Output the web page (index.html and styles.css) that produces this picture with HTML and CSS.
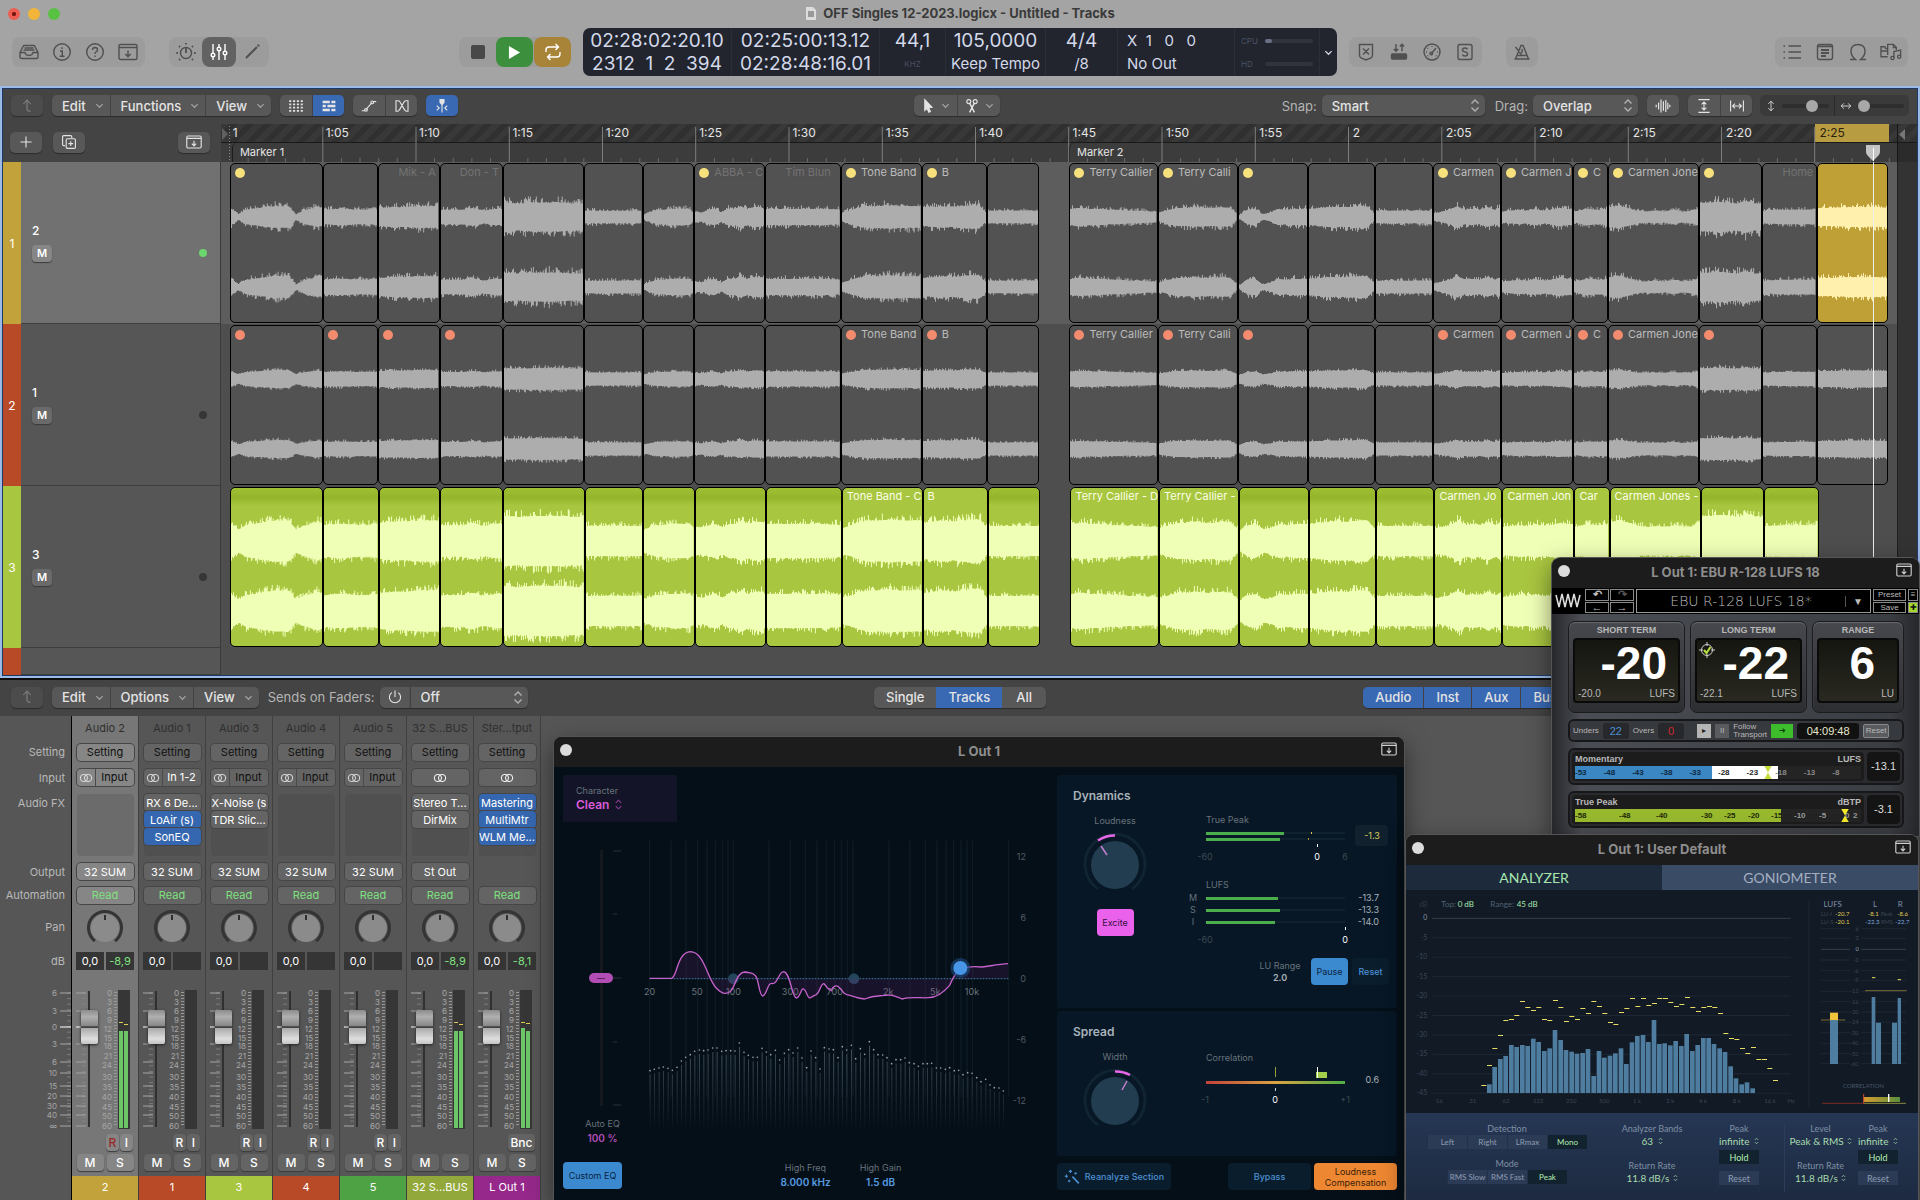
FILE: index.html
```html
<!DOCTYPE html>
<html lang="en">
<head>
<meta charset="UTF-8" />
<meta name="viewport" content="width=device-width, initial-scale=1" />
<title>OFF Singles 12-2023.logicx - Untitled - Tracks</title>
<link rel="stylesheet" href="styles.css">
</head>
<body>

<!-- icon set -->
<svg class="sprite" aria-hidden="true">
  <symbol id="i-inbox" viewBox="0 0 20 20"><path d="M1 10.500 4 4.500Q4.400 3.500 5.500 3.500h9q1.100 0 1.500 1L19 10.500V15q0 1.500-1.500 1.500h-15Q1 16.500 1 15zM1 10.500h5q.5 3 4 3t4-3h5M5.500 6h9M4.500 8h11"/></symbol>
  <symbol id="i-info" viewBox="0 0 20 20"><circle cx="10" cy="10" r="8.300"/><path d="M8 9h2.300v5M7.800 14.300h4.600M10 5.200v1.800"/></symbol>
  <symbol id="i-help" viewBox="0 0 20 20"><circle cx="10" cy="10" r="8.300"/><path d="M7.500 8q0-2.500 2.500-2.500T12.500 8q0 1.200-1.500 2-1 .6-1 2M10 13.500v1.500"/></symbol>
  <symbol id="i-dock" viewBox="0 0 20 20"><rect x="1" y="2.500" width="18" height="15" rx="1.500"/><path d="M1 5.500h18M10 8.500v6M7.300 12l2.700 2.800 2.700-2.800"/></symbol>
  <symbol id="i-knob" viewBox="0 0 20 20"><circle cx="10" cy="11" r="5.500"/><path d="M10 5.500V11" stroke-width="1.800"/><path d="M10 1v1.600M3 4l1.100 1.100M17 4l-1.100 1.100M.3 11h1.600M18.100 11h1.600M3 18l1.100-1.100M17 18l-1.100-1.100" stroke-width="1.800"/></symbol>
  <symbol id="i-faders" viewBox="0 0 20 20"><path d="M4 2v9M4 15v3M10 2v3M10 9v9M16 2v7M16 13v5"/><circle cx="4" cy="13" r="1.800"/><circle cx="10" cy="7" r="1.800"/><circle cx="16" cy="11" r="1.800"/></symbol>
  <symbol id="i-pencil" viewBox="0 0 20 20"><path d="M4 16 15 5" stroke-width="2.200"/><path d="M15.800 4.200 17 3" stroke-width="2.600"/></symbol>
  <symbol id="i-cycle" viewBox="0 0 20 20"><path d="M3 10V8q0-3 3-3h9M12.500 2l3 3-3 3M17 10v2q0 3-3 3H5M7.500 18l-3-3 3-3"/></symbol>
  <symbol id="i-shield" viewBox="0 0 20 20"><path d="M3.500 2.500h13V13q0 2-1.500 3l-5 2-5-2q-1.500-1-1.500-3zM7 6.500l6 6M13 6.500l-6 6"/></symbol>
  <symbol id="i-inout" viewBox="0 0 20 20"><path d="M7 2v7M4.800 7 7 9.300 9.200 7M13 9.300v-7M10.800 4.500 13 2.200l2.200 2.300"/><rect x="2.500" y="12" width="15" height="5" rx="1" fill="currentColor"/></symbol>
  <symbol id="i-gauge" viewBox="0 0 20 20"><circle cx="10" cy="10" r="8"/><path d="M9.500 11.500 14 6M10 4v.8M5.500 6l.6.600M4 10h.8M15.200 10h.8M5.500 14l.6-.6M14.500 14l-.6-.6" /><circle cx="9.300" cy="11.500" r="1.300"/></symbol>
  <symbol id="i-solo" viewBox="0 0 20 20"><rect x="3" y="2.500" width="14" height="15" rx="1.800"/><path d="M12.600 7.300Q12 6 10 6 7.500 6 7.500 8q0 1.500 2.500 1.900t2.600 2.100q0 2-2.600 2-2.100 0-2.700-1.500"/></symbol>
  <symbol id="i-metro" viewBox="0 0 20 20"><path d="M3.500 17 9 3.500h2L16.500 17zM5 13.500h10M10 13.500 3.500 5M10 7v4M2.500 17h15"/></symbol>
  <symbol id="i-list" viewBox="0 0 20 20"><path d="M6.500 4H19M6.500 10H19M6.500 16H19M1.500 4h1.500M1.500 10h1.500M1.500 16h1.500"/></symbol>
  <symbol id="i-note" viewBox="0 0 20 20"><rect x="2.500" y="2.500" width="15" height="15" rx="2"/><path d="M3 4.300h14M6 8h8M6 11h8M6 14h5" stroke-width="1.800"/></symbol>
  <symbol id="i-loop" viewBox="0 0 20 20"><path d="M2 17.500h5.500Q3 14 3 9.300 3 2.500 10 2.500t7 6.800q0 4.700-4.500 8.200H18"/></symbol>
  <symbol id="i-media" viewBox="0 0 24 20"><path d="M8 15H1V4.500h4l1 1.800h2M1 9h7M8 13V2h6l3 3v3M14 2v3.500h3M14.500 16V9.500l7-1.500v6.500"/><circle cx="13" cy="16.300" r="1.700"/><circle cx="20" cy="15" r="1.700"/></symbol>
  <symbol id="i-up" viewBox="0 0 20 20"><path d="M5.500 7.500 10 2.500l4.500 5M10 3v10q0 3.500 4.500 3.500"/></symbol>
  <symbol id="i-chev" viewBox="0 0 10 10"><path d="M1.500 3.500 5 7l3.500-3.500"/></symbol>
  <symbol id="i-grid" viewBox="0 0 20 20"><path d="M1.500 4h17M1.500 8h17M1.500 12h17M1.500 16h17" stroke-width="2.200" stroke-dasharray="2.600 2.200"/></symbol>
  <symbol id="i-bars" viewBox="0 0 20 20"><path d="M2 5h9M13 5h5M2 10h4M8 10h10M2 15h9M13 15h5" stroke-width="3"/></symbol>
  <symbol id="i-auto" viewBox="0 0 20 20"><path d="M1 16h4M15 4.500h4M6 14.500 13.500 6"/><circle cx="6.300" cy="14.800" r="1.700"/><circle cx="14" cy="5.500" r="1.700"/></symbol>
  <symbol id="i-flex" viewBox="0 0 20 20"><path d="M2.500 3.500H5q1.500 0 2.500 1.500l5.500 9.500q1 2 2.500 2h2v-13H15q-1.500 0-2.500 1.500L7 14.500q-1 2-2.500 2h-2z"/></symbol>
  <symbol id="i-catch" viewBox="0 0 20 20"><path d="M10 7v11M3.500 9.500 6.500 12.500l-3 3M16.500 9.500l-3 3 3 3"/><path d="M7.500 2h5v3.500L10 8 7.500 5.500z" fill="currentColor"/></symbol>
  <symbol id="i-arrow" viewBox="0 0 20 20"><path d="M6 2l9 9.500-4.300.3 2.300 5-2 1-2.300-5L6 15.500z" fill="currentColor"/></symbol>
  <symbol id="i-scissors" viewBox="0 0 20 20"><circle cx="6" cy="4.500" r="2.500"/><circle cx="14" cy="4.500" r="2.500"/><path d="M7.200 6.800 13 18M12.800 6.800 7 18" stroke-width="1.800"/></symbol>
  <symbol id="i-wave" viewBox="0 0 20 20"><path d="M1.500 8.500v3M4.500 5.500v9M7.500 2v16M10.500 4v12M13.500 2.500v15M16 6v8M18.500 8.500v3" stroke-width="1.500"/></symbol>
  <symbol id="i-vfit" viewBox="0 0 20 20"><path d="M3 2h14M3 18h14M10 5v10M7 8l3-3 3 3M7 12l3 3 3-3"/></symbol>
  <symbol id="i-hfit" viewBox="0 0 20 20"><path d="M2 3v14M18 3v14M4.500 10h11M7.500 7l-3 3 3 3M12.500 7l3 3-3 3"/></symbol>
  <symbol id="i-varrow" viewBox="0 0 20 20"><path d="M10 2v16M5.500 6.500 10 2l4.500 4.500M5.500 13.500 10 18l4.500-4.500"/></symbol>
  <symbol id="i-harrow" viewBox="0 0 20 20"><path d="M2 10h16M6.500 5.500 2 10l4.500 4.500M13.500 5.500 18 10l-4.500 4.500"/></symbol>
  <symbol id="i-plus" viewBox="0 0 20 20"><path d="M10 3v14M3 10h14"/></symbol>
  <symbol id="i-dup" viewBox="0 0 20 20"><path d="M5 14.500H3.500Q2 14.500 2 13V3.500Q2 2 3.500 2H12q1.500 0 1.500 1.500V5"/><rect x="6.500" y="6" width="11.500" height="12" rx="1.500"/><path d="M12.200 9v6M9.200 12h6"/></symbol>
  <symbol id="i-power" viewBox="0 0 20 20"><path d="M10 2v8M6 4.500a7 7 0 1 0 8 0"/></symbol>
  <symbol id="i-rings" viewBox="0 0 20 20"><circle cx="7" cy="10" r="5.200"/><circle cx="13" cy="10" r="5.200"/></symbol>
  <symbol id="i-updown" viewBox="0 0 10 14"><path d="M1.500 5 5 1.500 8.500 5M1.500 9 5 12.500 8.500 9"/></symbol>
  <symbol id="i-wand" viewBox="0 0 20 20"><path d="M10.500 9.500 18.500 18" stroke-width="2"/><path d="M8 1v4M6 3h4M3 7v4M1 9h4M14.500 4v3M13 5.500h3M6.500 13.500v3M5 15h3"/></symbol>
</svg>

<header class="titlebar">
  <span class="lights"><i class="red"></i><i class="amber"></i><i class="green"></i></span>
  <svg class="doc" viewBox="0 0 12 15"><path d="M1 1h7l3 3v10H1z" fill="#dcdcdc"/><rect x="3" y="5" width="6" height="6" fill="#999"/></svg>
  <h1>OFF Singles 12-2023.logicx - Untitled - Tracks</h1>
</header>

<div class="toolbar">
  <div class="zone">
    <div class="pill four">
      <button aria-label="Library"><svg class="ic"><use href="#i-inbox"/></svg></button>
      <button aria-label="Inspector"><svg class="ic"><use href="#i-info"/></svg></button>
      <button aria-label="Quick Help"><svg class="ic"><use href="#i-help"/></svg></button>
      <button aria-label="Toolbar"><svg class="ic"><use href="#i-dock"/></svg></button>
    </div>
    <div class="pill three">
      <button aria-label="Smart Controls"><svg class="ic"><use href="#i-knob"/></svg></button>
      <button class="on" aria-label="Mixer"><svg class="ic"><use href="#i-faders"/></svg></button>
      <button aria-label="Editors"><svg class="ic"><use href="#i-pencil"/></svg></button>
    </div>
    <div class="pill transport">
      <button aria-label="Stop"><span class="stop"></span></button>
      <button class="play" aria-label="Play"><svg viewBox="0 0 14 16"><path d="M1 1l12 7-12 7z" fill="#fff"/></svg></button>
      <button class="cycle" aria-label="Cycle"><svg class="ic"><use href="#i-cycle"/></svg></button>
    </div>
  </div>
  <div class="lcd">
    <div class="c1"><b>02:28:02:20.10</b><b>2312&nbsp; 1&nbsp; 2&nbsp; 394</b></div>
    <div class="c2"><b>02:25:00:13.12</b><b>02:28:48:16.01</b></div>
    <div class="c3"><b>44,1</b><small>KHZ</small></div>
    <div class="c4"><b>105,0000</b><span>Keep Tempo</span></div>
    <div class="c5"><b>4/4</b><span>/8</span></div>
    <div class="c6"><span>X&nbsp; 1&nbsp;&nbsp; 0&nbsp;&nbsp; 0</span><span>No Out</span></div>
    <div class="c7"><label>CPU <i class="load"><i></i></i></label><label>HD <i class="load"></i></label></div>
    <button class="c8" aria-label="Display options"><svg class="ic small"><use href="#i-chev"/></svg></button>
  </div>
  <div class="zone">
    <div class="pill four">
      <button aria-label="Replace"><svg class="ic"><use href="#i-shield"/></svg></button>
      <button aria-label="Low Latency"><svg class="ic"><use href="#i-inout"/></svg></button>
      <button aria-label="Tuner"><svg class="ic"><use href="#i-gauge"/></svg></button>
      <button aria-label="Solo"><svg class="ic"><use href="#i-solo"/></svg></button>
    </div>
    <div class="pill one">
      <button aria-label="Metronome"><svg class="ic"><use href="#i-metro"/></svg></button>
    </div>
    <div class="pill four end">
      <button aria-label="List Editors"><svg class="ic"><use href="#i-list"/></svg></button>
      <button aria-label="Note Pads"><svg class="ic"><use href="#i-note"/></svg></button>
      <button aria-label="Loops"><svg class="ic"><use href="#i-loop"/></svg></button>
      <button aria-label="Browsers"><svg class="ic wide"><use href="#i-media"/></svg></button>
    </div>
  </div>
</div>

<main class="tracks">
  <div class="bar">
    <button class="btn faint" aria-label="Leave folder"><svg class="ic"><use href="#i-up"/></svg></button>
    <div class="seg menus">
      <button>Edit <svg class="ic small"><use href="#i-chev"/></svg></button>
      <button>Functions <svg class="ic small"><use href="#i-chev"/></svg></button>
      <button>View <svg class="ic small"><use href="#i-chev"/></svg></button>
    </div>
    <div class="seg icons">
      <button aria-label="Live Loops"><svg class="ic"><use href="#i-grid"/></svg></button>
      <button class="on" aria-label="Tracks view"><svg class="ic"><use href="#i-bars"/></svg></button>
    </div>
    <div class="seg icons">
      <button aria-label="Automation"><svg class="ic"><use href="#i-auto"/></svg></button>
      <button aria-label="Flex"><svg class="ic"><use href="#i-flex"/></svg></button>
    </div>
    <div class="seg icons">
      <button class="on" aria-label="Catch"><svg class="ic"><use href="#i-catch"/></svg></button>
    </div>
    <div class="seg tools">
      <button aria-label="Pointer tool"><svg class="ic"><use href="#i-arrow"/></svg><svg class="ic small"><use href="#i-chev"/></svg></button>
      <button aria-label="Scissors tool"><svg class="ic"><use href="#i-scissors"/></svg><svg class="ic small"><use href="#i-chev"/></svg></button>
    </div>
    <label for="snap">Snap:</label>
    <span class="pick w-snap"><select id="snap"><option>Smart</option></select><svg class="ic"><use href="#i-updown"/></svg></span>
    <label for="drag">Drag:</label>
    <span class="pick w-drag"><select id="drag"><option>Overlap</option></select><svg class="ic"><use href="#i-updown"/></svg></span>
    <div class="seg icons"><button aria-label="Waveform zoom"><svg class="ic"><use href="#i-wave"/></svg></button></div>
    <div class="seg icons">
      <button aria-label="Fit height"><svg class="ic"><use href="#i-vfit"/></svg></button>
      <button aria-label="Fit width"><svg class="ic"><use href="#i-hfit"/></svg></button>
    </div>
    <div class="zooms">
      <label><svg class="ic"><use href="#i-varrow"/></svg><input class="z1" type="range" value="68" aria-label="Vertical zoom"></label>
      <label><svg class="ic"><use href="#i-harrow"/></svg><input class="z2" type="range" value="2" aria-label="Horizontal zoom"></label>
    </div>
  </div>

  <div class="arrange">
    <div class="row head">
      <div class="adders">
        <button class="btn" aria-label="Add track"><svg class="ic"><use href="#i-plus"/></svg></button>
        <button class="btn" aria-label="Duplicate track"><svg class="ic"><use href="#i-dup"/></svg></button>
        <button class="btn last" aria-label="Track import"><svg class="ic"><use href="#i-dock"/></svg></button>
      </div>
      <div class="ruler">
        <div class="times" id="times"></div>
        <div class="markers">
          <span style="flex-grow:11"></span><span class="marker" style="flex-grow:837">Marker 1</span>
          <span class="marker" style="flex-grow:828">Marker 2</span><span class="beyond" style="flex-grow:20"></span>
        </div>
        <svg id="ticks" viewBox="0 0 1696 38" preserveAspectRatio="none"></svg>
      </div>
    </div>
    <div class="row track sel">
      <div class="num gold">1</div>
      <div class="info"><h2>2</h2><button>M</button><i class="led lit"></i></div>
      <div class="lane" id="lane1"></div>
    </div>
    <div class="row track">
      <div class="num rust">2</div>
      <div class="info"><h2>1</h2><button>M</button><i class="led"></i></div>
      <div class="lane" id="lane2"></div>
    </div>
    <div class="row track">
      <div class="num lime">3</div>
      <div class="info"><h2>3</h2><button>M</button><i class="led"></i></div>
      <div class="lane" id="lane3"></div>
    </div>
    <div class="row rest">
      <div class="num rust"></div>
      <div class="info"></div>
      <div class="lane" id="lane4"></div>
    </div>
    <div class="playhead"><svg viewBox="0 0 16 18"><path d="M1 1h14v7q0 2-2 4l-5 5-5-5q-2-2-2-4z" fill="#c4c4c4"/><path d="M8.500 4v13" stroke="#fff"/></svg></div>
  </div>
</main>

<section class="mixer">
  <div class="bar">
    <button class="btn faint" aria-label="Back"><svg class="ic"><use href="#i-up"/></svg></button>
    <div class="seg menus">
      <button>Edit <svg class="ic small"><use href="#i-chev"/></svg></button>
      <button>Options <svg class="ic small"><use href="#i-chev"/></svg></button>
      <button>View <svg class="ic small"><use href="#i-chev"/></svg></button>
    </div>
    <label for="sends">Sends on Faders:</label>
    <div class="seg sends">
      <button aria-label="Sends power"><svg class="ic"><use href="#i-power"/></svg></button>
      <span class="pick w-sends"><select id="sends"><option>Off</option></select><svg class="ic"><use href="#i-updown"/></svg></span>
    </div>
    <div class="seg scope"><button>Single</button><button class="on">Tracks</button><button>All</button></div>
    <div class="seg kinds"><button class="on">Audio</button><button class="on">Inst</button><button class="on">Aux</button><button class="on">Bus</button><button class="on">Input</button><button class="on">Output</button></div>
  </div>
  <div class="console">
    <div class="strip legend">
      <span></span><span>Setting</span><span>Input</span><span class="top">Audio FX</span><span>Output</span>
      <span>Automation</span><span>Pan</span><span>dB</span><svg id="legendScale" viewBox="0 0 72 158"></svg>
    </div>
    <div class="strips" id="strips"></div>
  </div>
</section>

<!-- Mastering Assistant -->
<section class="win mastering">
  <header><i class="close"></i><h2>L Out 1</h2><svg class="ic dock"><use href="#i-dock"/></svg></header>
  <div class="mbody">
    <div class="left">
      <div class="character">
        <label for="character">Character</label>
        <span><select id="character"><option>Clean</option></select><svg class="ic"><use href="#i-updown"/></svg></span>
      </div>
      <div class="graphrow">
        <div class="autoeq">
          <div class="autoslide">
            <input type="range" min="0" max="100" value="50" id="autoeq">
            <svg viewBox="0 0 10 256"><path d="M0 1h8M0 64h4M0 128h8M0 192h4M0 255h8" stroke="#26323b" stroke-width="1"/></svg>
          </div>
          <label for="autoeq">Auto EQ</label><b>100 %</b>
        </div>
        <svg class="graph" id="eq" viewBox="280 320 1170 882"></svg>
      </div>
      <div class="foot">
        <button class="blue">Custom EQ</button>
        <div class="val">High Freq<b>8.000 kHz</b></div>
        <div class="val">High Gain<b>1.5 dB</b></div>
      </div>
    </div>
    <div class="right">
      <div class="panel dyn">
        <h3>Dynamics</h3>
        <div class="cols">
          <div class="knobcol">
            <span>Loudness</span>
            <svg viewBox="0 0 64 64"><path d="M15 57a30 30 0 1 1 34 0" fill="none" stroke="#102431" stroke-width="3"/><circle cx="32" cy="33" r="24" fill="#223d4f"/><path d="M15 8.500a30 30 0 0 1 17-5" fill="none" stroke="#e867e8" stroke-width="2.500"/><path d="M18 14l6 9" stroke="#c77fd0" stroke-width="1.500"/></svg>
            <button class="pink">Excite</button>
          </div>
          <div class="metercol">
            <svg id="dynMeters" viewBox="0 0 212 140"></svg>
            <div class="acts"><div class="val lu">LU Range<b>2.0</b></div><button class="blue">Pause</button><button class="dark">Reset</button></div>
          </div>
        </div>
      </div>
      <div class="panel spread">
        <h3>Spread</h3>
        <div class="cols">
          <div class="knobcol">
            <span>Width</span>
            <svg viewBox="0 0 64 64"><path d="M15 57a30 30 0 1 1 34 0" fill="none" stroke="#102431" stroke-width="3"/><circle cx="32" cy="33" r="24" fill="#223d4f"/><path d="M32 3.500a30 30 0 0 1 15 3.500" fill="none" stroke="#e867e8" stroke-width="2.500"/><path d="M44 13l-5 9" stroke="#c77fd0" stroke-width="1.500"/></svg>
          </div>
          <div class="metercol"><svg id="corr" viewBox="0 0 212 60"></svg></div>
        </div>
      </div>
      <div class="foot2">
        <button class="dark wandbtn"><svg class="ic"><use href="#i-wand"/></svg>Reanalyze Section</button>
        <button class="dark bypass">Bypass</button>
        <button class="orange">Loudness Compensation</button>
      </div>
    </div>
  </div>
</section>

<!-- loudness meter -->
<section class="win ebu">
  <header><i class="close"></i><h2>L Out 1: EBU R-128 LUFS 18</h2><svg class="ic dock"><use href="#i-dock"/></svg></header>
  <div class="preset">
    <svg class="logo" viewBox="0 0 24 20"><path d="M2 5l2.500 10L7 4l2.500 11L12 4l2.500 11L17 4l2.500 11L22 5" fill="none" stroke="#ddd" stroke-width="1.300"/></svg>
    <div class="hist"><button aria-label="Undo">↶</button><button class="off" aria-label="Redo">↷</button><button aria-label="Previous">←</button><button aria-label="Next">→</button></div>
    <span class="pname"><select aria-label="Preset name"><option>EBU R-128 LUFS 18*</option></select><em>▼</em></span>
    <div class="ps"><button>Preset</button><button>Save</button></div>
    <div class="px"><button aria-label="Menu">≡</button><button class="add" aria-label="Add">✚</button></div>
  </div>
  <div class="ebody">
    <div class="screens">
      <div class="screen"><h3>SHORT TERM</h3><div><b>-20</b><p><span>-20.0</span><span>LUFS</span></p></div></div>
      <div class="screen"><h3>LONG TERM</h3><div><svg class="target" viewBox="0 0 16 16"><circle cx="8" cy="8" r="5.500" fill="none" stroke="#ccc"/><path d="M8 0v4M8 12v4M0 8h4M12 8h4" stroke="#ccc"/><path d="M5 8l2.500 3L11.500 5" fill="none" stroke="#b6e03c" stroke-width="2"/></svg><b>-22</b><p><span>-22.1</span><span>LUFS</span></p></div></div>
      <div class="screen range"><h3>RANGE</h3><div><b>6</b><p><span></span><span>LU</span></p></div></div>
    </div>
    <div class="status">
      <span>Unders</span><output class="u">22</output><span>Overs</span><output class="o">0</output>
      <button class="lit" aria-label="Run">▸</button><button aria-label="Hold">II</button>
      <span class="ft">Follow Transport</span><button class="go" aria-label="Follow">➔</button>
      <output class="clock">04:09:48</output><button class="reset">Reset</button>
    </div>
    <div class="level">
      <div class="gauge"><p><span>Momentary</span><span>LUFS</span></p>
        <div class="scale mom"><i>-53</i><i>-48</i><i>-43</i><i>-38</i><i>-33</i><i class="k">-28</i><i class="k">-23</i><i class="g">-18</i><i class="g">-13</i><i class="g">-8</i><svg viewBox="0 0 8 14"><path d="M0 0h8L4 7l4 7H0l4-7z" fill="#c9dc3f"/></svg></div>
      </div>
      <output>-13.1</output>
    </div>
    <div class="level">
      <div class="gauge"><p><span>True Peak</span><span>dBTP</span></p>
        <div class="scale tp"><i style="flex-grow:44">-58</i><i style="flex-grow:37">-48</i><i style="flex-grow:45">-40</i><i style="flex-grow:23">-30</i><i style="flex-grow:24">-25</i><i style="flex-grow:23">-20</i><i style="flex-grow:23">-15</i><i class="g" style="flex-grow:25">-10</i><i class="g" style="flex-grow:26">-5</i><i class="g" style="flex-grow:8">0</i><i class="g" style="flex-grow:8">2</i><svg viewBox="0 0 8 14"><path d="M0 0h8L4 7l4 7H0l4-7z" fill="#f4ea2a"/></svg></div>
      </div>
      <output>-3.1</output>
    </div>
  </div>
</section>

<!-- MultiMeter -->
<section class="win multi">
  <header><i class="close"></i><h2>L Out 1: User Default</h2><svg class="ic dock"><use href="#i-dock"/></svg></header>
  <div class="tabs"><button class="active">ANALYZER</button><button>GONIOMETER</button></div>
  <svg class="display" id="analyzer" viewBox="18 180 1536 669"></svg>
  <div class="controls">
    <div class="det">
      <span>Detection</span>
      <div class="sw"><button>Left</button><button>Right</button><button>LRmax</button><button class="on">Mono</button></div>
      <span>Mode</span>
      <div class="sw"><button>RMS Slow</button><button>RMS Fast</button><button class="on">Peak</button></div>
    </div>
    <div class="opt w-bands">
      <label for="bands">Analyzer Bands</label><span class="mini n2"><select id="bands"><option>63</option></select><svg class="ic"><use href="#i-updown"/></svg></span>
      <label for="rate1" class="second">Return Rate</label><span class="mini n7"><select id="rate1"><option>11.8 dB/s</option></select><svg class="ic"><use href="#i-updown"/></svg></span>
    </div>
    <div class="opt w-peak">
      <label for="peak1">Peak</label><span class="mini n5"><select id="peak1"><option>infinite</option></select><svg class="ic"><use href="#i-updown"/></svg></span>
      <button class="on">Hold</button><button>Reset</button>
    </div>
    <div class="opt w-level">
      <label for="level">Level</label><span class="mini n8"><select id="level"><option>Peak &amp; RMS</option></select><svg class="ic"><use href="#i-updown"/></svg></span>
      <label for="rate2" class="second">Return Rate</label><span class="mini n7"><select id="rate2"><option>11.8 dB/s</option></select><svg class="ic"><use href="#i-updown"/></svg></span>
    </div>
    <div class="opt w-peak2">
      <label for="peak2">Peak</label><span class="mini n5"><select id="peak2"><option>infinite</option></select><svg class="ic"><use href="#i-updown"/></svg></span>
      <button class="on">Hold</button><button>Reset</button>
    </div>
  </div>
</section>

<script src="app.js"></script>
</body>
</html>
```

FILE: styles.css
```css
* {
  box-sizing: border-box;
}
body {
  margin: 0;
  height: 100vh;
  display: flex;
  flex-direction: column;
  overflow: hidden;
  position: relative;
  background: #a4a4a4;
  font-family: Inter, "Liberation Sans", sans-serif;
  font-size: 12px;
  color: #e4e4e4;
}
h1, h2, h3, p {
  margin: 0;
}
button, select, input {
  font: inherit;
  color: inherit;
  margin: 0;
}
button {
  border: none;
  padding: 0;
  background: none;
  display: flex;
  align-items: center;
  justify-content: center;
}
select {
  appearance: none;
  border: none;
  background: none;
  padding: 0;
  outline: none;
}
.sprite {
  display: none;
}
.ic {
  width: 16px;
  height: 16px;
  fill: none;
  stroke: currentColor;
  stroke-width: 1.4;
  flex: none;
}
.ic.small {
  width: 9px;
  height: 9px;
}

/* window title and control bar */
.titlebar {
  height: 26px;
  display: flex;
  align-items: center;
  justify-content: center;
  gap: 6px;
  position: relative;
  flex: none;
}
.titlebar h1 {
  font-size: 13px;
  font-weight: 700;
  color: #3a3a3a;
}
.doc {
  width: 12px;
  height: 15px;
}
.lights {
  position: absolute;
  left: 8px;
  top: 8px;
  display: flex;
  gap: 8px;
}
.lights i {
  width: 12px;
  height: 12px;
  border-radius: 50%;
}
.lights .red { background: radial-gradient(circle, #7c1510 20%, #ee5d52 30%); }
.lights .amber { background: #f2b53a; }
.lights .green { background: #58c142; }
.toolbar {
  height: 52px;
  margin-bottom: 8px;
  display: flex;
  align-items: center;
  flex: none;
}
.zone {
  flex: 1;
  display: flex;
  align-items: center;
  padding: 0 12px;
  gap: 24px;
}
.pill {
  display: flex;
  height: 30px;
  border-radius: 8px;
  background: #9c9c9c;
  color: #505050;
  overflow: hidden;
}
.pill button {
  flex: 1;
  border-radius: 8px;
}
.pill .ic {
  width: 20px;
  height: 20px;
}
.pill .ic.wide {
  width: 23px;
}
.pill .on {
  background: #626262;
  color: #fff;
}
.four { width: 133px; }
.three { width: 100px; }
.one { width: 32px; }
.end { margin-left: auto; }
.transport {
  width: 112px;
  margin-left: auto;
}
.stop {
  width: 14px;
  height: 14px;
  border-radius: 2px;
  background: #484848;
}
.pill .play {
  background: #3c8f3c;
}
.play svg {
  width: 13px;
  height: 15px;
}
.pill .cycle {
  background: #a88438;
  color: #fff;
  margin-left: 1px;
}
.lcd {
  width: 754px;
  height: 48px;
  border-radius: 7px;
  background: #22252e;
  color: #d3d9ea;
  display: flex;
}
.lcd > * {
  display: flex;
  flex-direction: column;
  justify-content: space-around;
  align-items: center;
  border-right: 1px solid #2b2f39;
  font-size: 15px;
  line-height: 22px;
  white-space: nowrap;
  padding: 1px 0;
}
.lcd b {
  font-size: 19px;
  font-weight: 400;
}
.lcd small {
  font-size: 8px;
  color: #4a4f60;
}
.c1 { width: 149px; }
.c2 { width: 148px; }
.c3 { width: 66px; }
.c4 { width: 100px; }
.c5 { width: 72px; }
.lcd .c6 { width: 117px; align-items: flex-start; padding-left: 9px; }
.lcd .c7 { width: 85px; font-size: 8px; color: #4c5265; }
.lcd .c8 { flex: 1; border: none; }
.c7 label {
  display: flex;
  width: 72px;
  align-items: center;
  justify-content: space-between;
}
.load {
  width: 48px;
  height: 4px;
  border-radius: 2px;
  background: #30343f;
  display: flex;
}
.load i {
  width: 7px;
  border-radius: 2px;
  background: #6a7086;
}

/* shared bar of the tracks area and the mixer */
.bar {
  height: 35px;
  display: flex;
  align-items: center;
  padding: 0 8px 2px;
  background: #444;
  flex: none;
  font-size: 13px;
  font-weight: 500;
}
.bar > label {
  color: #b4b4b4;
  margin-right: 5px;
  font-weight: 400;
}
.btn {
  width: 32px;
  height: 21px;
  border-radius: 5px;
  background: #585858;
  box-shadow: 0 1px 1px #2c2c2c;
}
.btn.faint {
  background: #4c4c4c;
  color: #808080;
}
.seg {
  display: flex;
  height: 21px;
  border-radius: 5px;
  background: #585858;
  box-shadow: 0 1px 1px #2c2c2c;
  overflow: hidden;
}
.seg button {
  border-left: 1px solid #424242;
}
.seg button:first-child {
  border-left: none;
}
.seg .on {
  background: #3a69b4;
}
.seg.icons {
  margin-left: 9px;
}
.icons button {
  width: 32px;
}
.menus {
  margin-left: 9px;
}
.menus button {
  padding: 0 6px 0 10px;
  gap: 9px;
}
.menus .ic, .tools .small {
  color: #a0a0a0;
}
.tools {
  margin-left: auto;
  margin-right: 282px;
}
.tools button {
  width: 43px;
  gap: 5px;
}
.pick {
  display: flex;
  align-items: center;
  height: 21px;
  border-radius: 5px;
  background: #585858;
  box-shadow: 0 1px 1px #2c2c2c;
  padding: 0 5px 0 10px;
}
.pick select {
  flex: 1;
  min-width: 0;
}
.pick .ic {
  width: 10px;
  height: 15px;
  color: #b0b0b0;
}
.w-snap { width: 163px; margin-right: 10px; }
.w-drag { width: 105px; }
.w-sends { width: 118px; border-radius: 0; border-left: 1px solid #424242; }
.sends button { width: 30px; }
.zooms {
  display: flex;
  margin-left: 8px;
  width: 149px;
  height: 21px;
  border-radius: 5px;
  background: #3a3a3a;
}
.zooms label {
  display: flex;
  align-items: center;
  gap: 5px;
  padding: 0 5px;
  flex: 1;
  min-width: 0;
}
.zooms label + label {
  border-left: 1px solid #2a2a2a;
}
.zooms .ic {
  width: 12px;
  height: 12px;
}
.zooms input {
  appearance: none;
  flex: 1;
  min-width: 0;
  height: 4px;
  border-radius: 2px;
  background: #2e2e2e;
}
.zooms input::-webkit-slider-thumb {
  appearance: none;
  width: 12px;
  height: 12px;
  border-radius: 50%;
  background: #a8a8a8;
}

/* arrangement */
.tracks {
  border: 3px solid #9db9e6;
  outline: 1px solid #1c3a66;
  outline-offset: -3px;
  flex: none;
}
.arrange {
  position: relative;
}
.row {
  display: flex;
}
.head {
  height: 38px;
}
.adders {
  width: 218px;
  padding: 0 11px 2px 7px;
  display: flex;
  align-items: center;
  gap: 11px;
  background: #444;
  flex: none;
}
.adders .last {
  margin-left: auto;
}
.ruler {
  flex: 1;
  position: relative;
  background: #3c3c3c;
  display: flex;
  flex-direction: column;
}
.times {
  height: 20px;
  display: flex;
  border-bottom: 1px solid #191919;
  background: repeating-linear-gradient(135deg, #383838 0 6px, #303030 6px 12px);
  font-size: 12px;
  line-height: 17px;
}
.times span {
  flex: 1 1 0;
  min-width: 0;
  padding-left: 4px;
  white-space: nowrap;
  overflow: hidden;
}
.times .loop {
  background: #b79c42;
  color: #2a230c;
}
.markers {
  flex: 1;
  display: flex;
  font-size: 11px;
  line-height: 19px;
}
.markers span {
  flex: 1 1 0;
}
.markers .marker {
  border-left: 1px solid #1c1c1c;
  border-top-left-radius: 5px;
  padding-left: 7px;
}
.markers .beyond {
  background: #2b2b2b;
}
#ticks {
  position: absolute;
  inset: 0;
  width: 100%;
  height: 100%;
}
.track {
  height: 162px;
}
.rest {
  height: 27px;
}
.num {
  width: 18px;
  display: flex;
  align-items: center;
  justify-content: center;
  color: #fff;
  flex: none;
}
.gold { background: #c2a23a; }
.rust { background: #b94a28; }
.lime { background: #a9c640; }
.green { background: #4ea243; }
.olive { background: #93a83a; }
.purple { background: #95288a; }
.info {
  width: 200px;
  position: relative;
  background: #565656;
  border-bottom: 1px solid #3e3e3e;
  flex: none;
  display: flex;
  flex-direction: column;
  justify-content: center;
  gap: 7px;
  padding-left: 11px;
  border-right: 1px solid #3a3a3a;
}
.sel .info {
  background: #717171;
}
.info h2 {
  font-size: 12px;
  line-height: 14px;
  font-weight: 500;
  color: #fff;
}
.info button {
  width: 20px;
  height: 17px;
  border-radius: 4px;
  background: #6a6a6a;
  color: #fff;
  font-size: 11px;
  font-weight: 600;
  box-shadow: 0 1px 1px #3a3a3a;
}
.sel .info button {
  background: #868686;
}
.led {
  position: absolute;
  right: 13px;
  bottom: 66px;
  width: 8px;
  height: 8px;
  border-radius: 50%;
  background: #363636;
}
.led.lit {
  background: #6bd66b;
}
.lane {
  flex: 1;
  display: flex;
  background: #4e4e4e;
  min-width: 0;
}
.sel .lane {
  background: #5d5d5d;
}
.lane > * {
  flex: 1 1 0;
  min-width: 0;
}
.lane .beyond {
  background: #333;
  border-left: 1px solid #1e1e1e;
}
.region {
  margin: 1px 0;
  border: 1px solid #000;
  border-radius: 5px;
  background: #525252;
  position: relative;
  overflow: hidden;
  font-size: 11px;
  line-height: 16px;
  white-space: nowrap;
  color: #bcbcbc;
}
.region svg {
  position: absolute;
  inset: 0;
  width: 100%;
  height: 100%;
}
.region span {
  padding-left: 19px;
}
.region .faded {
  opacity: 0.3;
}
.region i {
  position: absolute;
  left: 4px;
  top: 4px;
  width: 10px;
  height: 10px;
  border-radius: 50%;
  background: #f7e17c;
}
#lane2 .region i {
  background: #f38b6e;
}
#lane3 .region {
  background: #a9c640;
  color: #fbffe6;
}
#lane3 .region.plain {
  background: linear-gradient(#a0c032, #93b42c 10px, #9fbe36 14px, #a9c640 18px);
}
#lane3 .region span {
  padding-left: 4px;
}
#lane1 .region.hot {
  background: #bfa037;
}
.playhead {
  position: absolute;
  left: calc(218px + (100% - 218px) * 0.974);
  top: 38px;
  bottom: 0;
  width: 1px;
  background: #eee;
}
.playhead svg {
  position: absolute;
  left: -8px;
  top: -18px;
  width: 16px;
  height: 18px;
}

/* mixer */
.mixer {
  flex: 1;
  display: flex;
  flex-direction: column;
  border-top: 2px solid #0d0d0d;
  background: #565656;
}
.mixer .bar {
  height: 36px;
  padding: 0 11px 2px;
}
.mixer .menus {
  margin-right: 9px;
}
.seg.scope {
  position: absolute;
  left: 50%;
  margin-left: -86px;
}
.scope button {
  padding: 0 12px;
}
.scope .on, .scope button + button {
  border-left: none;
}
.scope button:last-child {
  padding: 0 14px;
}
.kinds {
  margin-left: auto;
  margin-right: 216px;
}
.kinds button {
  padding: 0 12px;
}
.console {
  display: flex;
  flex: 1;
}
.strips {
  display: flex;
}
.strip {
  width: 67px;
  border-right: 1px solid #404040;
  display: grid;
  grid-template-rows: 24px 24px 27px 68px 25px 22px 42px 26px 158px 20px 21px 1fr;
  align-items: center;
  justify-items: center;
  font-size: 11px;
  color: #fff;
}
.strip.selected {
  background: #777;
}
.strip.legend {
  width: 72px;
  border-right: 1px solid #000;
  justify-items: end;
  color: #b9b9b9;
}
.legend span {
  padding-right: 7px;
}
.legend .top {
  align-self: start;
  padding-top: 5px;
}
.strip svg {
  display: block;
}
.cname {
  color: #2f2f2f;
}
.slot {
  width: 57px;
  height: 17px;
  border-radius: 4px;
  background: #646464;
  box-shadow: 0 0 0 1px #464646;
  white-space: nowrap;
  overflow: hidden;
}
.selected .slot, .selected .pair button {
  background: #868686;
}
.slot.black {
  color: #101010;
}
.slot.read {
  color: #7fe07f;
}
.slot .ic, .two .ic {
  width: 14px;
  height: 14px;
}
.two {
  display: flex;
}
.two > span {
  border-left: 1px solid #4a4a4a;
  flex: 1;
  line-height: 17px;
}
.two .ic {
  margin: 0 2px;
}
.fx {
  width: 57px;
  height: 62px;
  border-radius: 4px;
  background: #505050;
  display: flex;
  flex-direction: column;
}
.selected .fx {
  background: #6b6b6b;
}
.fx .slot.on {
  background: #3567b0;
}
.dbs {
  display: flex;
  gap: 2px;
}
.dbs output {
  width: 28px;
  height: 18px;
  line-height: 18px;
  background: #353535;
  text-align: center;
}
.dbs .pk {
  color: #7fe07f;
}
.fader {
  position: relative;
  width: 66px;
  height: 158px;
}
.fader svg {
  width: 66px;
  height: 158px;
}
.fader input {
  position: absolute;
  left: 8px;
  top: 14px;
  width: 19px;
  height: 142px;
  appearance: none;
  background: none;
  writing-mode: vertical-lr;
  direction: rtl;
}
.fader input::-webkit-slider-thumb {
  appearance: none;
  width: 17px;
  height: 34px;
  border-radius: 2px;
  background: linear-gradient(#8c8c8c, #b0b0b0 20%, #858585 48%, #222 49%, #222 51%, #aaa 53%, #dedede 85%, #c4c4c4);
  box-shadow: 0 1px 3px #222;
}
.pair {
  display: flex;
  gap: 3px;
  width: 57px;
  height: 17px;
}
.pair button {
  flex: 1;
  border-radius: 4px;
  background: #646464;
  box-shadow: 0 1px 1px #3c3c3c;
  font-weight: 500;
  font-size: 12px;
}
.pair.ri {
  width: 27px;
  gap: 1px;
  justify-self: end;
  margin-right: 5px;
}
.pair .rec {
  color: #992a2a;
}
.tag {
  align-self: end;
  width: 100%;
  height: 24px;
  line-height: 22px;
  text-align: center;
}

/* floating plug-in windows */
.win {
  position: absolute;
  border-radius: 8px 8px 0 0;
  box-shadow: 0 0 0 1px #555, 0 8px 24px rgba(0, 0, 0, 0.5);
  overflow: hidden;
  display: flex;
  flex-direction: column;
}
.win > header {
  height: 30px;
  padding-bottom: 2px;
  background: #1c1c1c;
  display: flex;
  align-items: center;
  justify-content: center;
  position: relative;
  flex: none;
}
.win h2 {
  font-size: 13px;
  font-weight: 700;
  color: #8e8e8e;
}
.close {
  position: absolute;
  left: 6px;
  top: 7px;
  width: 12px;
  height: 12px;
  border-radius: 50%;
  background: #dcdcdc;
}
.dock {
  position: absolute;
  right: 7px;
  top: 4px;
  color: #d0d0d0;
}

.mastering {
  right: 516px;
  bottom: 0;
  width: 850px;
  height: 463px;
  background: #050f18;
  color: #68737c;
  font-size: 9px;
}
.mbody {
  flex: 1;
  display: flex;
}
.left {
  flex: 1;
  padding: 8px 8px 0 9px;
  display: flex;
  flex-direction: column;
}
.character {
  width: 114px;
  height: 47px;
  background: #131427;
  padding: 10px 13px;
  display: flex;
  flex-direction: column;
  gap: 1px;
}
.character select {
  width: 35px;
  font-size: 12px;
  font-weight: 600;
  color: #d95bd9;
}
.character .ic {
  width: 9px;
  height: 11px;
  color: #8b3f92;
}
.character span {
  display: flex;
  align-items: center;
  gap: 3px;
}
.graphrow {
  display: flex;
  margin-top: 15px;
  height: 311px;
}
.autoeq {
  width: 79px;
  padding-top: 13px;
  display: flex;
  flex-direction: column;
  align-items: center;
}
.autoeq label {
  margin-top: 12px;
}
.autoeq b {
  font-size: 10px;
  font-weight: 600;
  color: #b34db6;
  margin-top: 3px;
}
.autoslide {
  display: flex;
  height: 256px;
  padding-left: 6px;
}
.autoslide input {
  appearance: none;
  writing-mode: vertical-lr;
  width: 24px;
  height: 256px;
  background: linear-gradient(90deg, transparent 11px, #15191d 11px, #15191d 14px, transparent 14px);
}
.autoslide input::-webkit-slider-thumb {
  appearance: none;
  width: 24px;
  height: 10px;
  border-radius: 5px;
  background: linear-gradient(#5c2460, #5c2460) center / 8px 1px no-repeat #b34db6;
}
.autoslide svg {
  width: 10px;
  height: 256px;
}
.graph {
  width: 390px;
  height: 294px;
}
.graph text {
  font-size: 27px;
}
.foot {
  display: flex;
  margin-top: 14px;
}
.foot .val {
  width: 75px;
}
.foot .blue {
  width: 59px;
  margin-right: 146px;
}
.val {
  text-align: center;
  display: flex;
  flex-direction: column;
  gap: 3px;
}
.val b {
  font-size: 10px;
  font-weight: 600;
  color: #569be0;
}
.val.lu b {
  color: #a8b2ba;
  font-size: 9px;
}
.mastering button {
  height: 27px;
  border-radius: 4px;
}
.mastering .blue {
  background: #3b8ad0;
  color: #0a2440;
}
.mastering .dark {
  background: #0a1d2c;
  color: #4d90d4;
  font-weight: 500;
}
.mastering .orange {
  background: #ee8732;
  color: #3a2008;
  width: 83px;
}
.mastering .pink {
  background: #ea62ec;
  color: #35103c;
  width: 37px;
}
.right {
  width: 347px;
  padding: 8px 7px 0 0;
  display: flex;
  flex-direction: column;
  gap: 3px;
}
.panel {
  background: #071725;
  border-radius: 3px;
  padding: 14px 0 0 16px;
}
.panel.dyn { height: 233px; }
.panel.spread { height: 145px; }
.panel h3 {
  font-size: 12px;
  line-height: 14px;
  font-weight: 600;
  color: #a8b2ba;
}
.cols {
  display: flex;
}
.knobcol {
  width: 84px;
  padding-top: 12px;
  display: flex;
  flex-direction: column;
  align-items: center;
}
.knobcol svg {
  width: 64px;
  height: 64px;
  margin: 6px 0 13px;
}
.metercol {
  flex: 1;
  padding: 5px 0 0 28px;
}
.metercol svg {
  display: block;
  width: 212px;
}
.metercol svg text {
  font-size: 9px;
}
.spread .metercol {
  padding-top: 13px;
}
.acts {
  display: flex;
  align-items: center;
  gap: 4px;
  padding-left: 68px;
  margin-top: 10px;
}
.acts .lu {
  width: 54px;
  gap: 1px;
}
.acts button {
  width: 37px;
}
.foot2 {
  display: flex;
  margin-top: 4px;
  gap: 3px;
}
.wandbtn {
  width: 114px;
  gap: 5px;
}
.bypass {
  width: 83px;
  margin-left: auto;
}

.ebu {
  right: 1px;
  bottom: 364px;
  width: 367px;
  height: 278px;
  background: linear-gradient(90deg, #26282c, #4a4d53 8%, #3a3d42 92%, #26282c);
  font-family: "Liberation Sans", Arial, sans-serif;
  font-size: 9px;
  color: #b8b8b8;
}
.ebu h2, .multi h2 {
  font-family: Inter, sans-serif;
}
.preset {
  height: 26px;
  background: #000;
  display: flex;
  gap: 2px;
  padding: 1px;
  color: #bbb;
}
.logo {
  width: 30px;
}
.hist {
  width: 49px;
  display: grid;
  grid-template-columns: 1fr 1fr;
  gap: 1px;
}
.hist .off {
  color: #555;
}
.preset button {
  border: 1px solid #8a8a8a;
  font-size: 8px;
  line-height: 9px;
}
.hist button {
  font-size: 11px;
  font-weight: 700;
}
.pname {
  flex: 1;
  border: 1px solid #999;
  display: flex;
  align-items: center;
  padding-right: 7px;
}
.pname select {
  flex: 1;
  font-family: "DejaVu Sans", sans-serif;
  font-weight: 200;
  font-size: 14px;
  text-align: center;
  text-align-last: center;
}
.pname em {
  font-style: normal;
  font-size: 10px;
  border-left: 1px solid #555;
  padding-left: 7px;
}
.ps {
  width: 33px;
  display: grid;
  gap: 1px;
}
.px {
  width: 10px;
  display: grid;
  gap: 1px;
}
.preset .add {
  background: #a6d82c;
  color: #111;
}
.ebody {
  padding: 7px 15px 0 16px;
  display: flex;
  flex-direction: column;
  gap: 6px;
}
.screens {
  display: flex;
  gap: 5px;
}
.screen {
  width: 117px;
  height: 92px;
  border-radius: 7px;
  background: linear-gradient(#46484d, #2c2e32);
  border: 1px solid #1b1b1e;
  box-shadow: inset 0 1px 1px #6a6c70;
  padding: 0 4px 9px;
  display: flex;
  flex-direction: column;
}
.screen.range {
  flex: 1;
}
.screen h3 {
  font-size: 9px;
  line-height: 16px;
  text-align: center;
  font-weight: 700;
}
.screen div {
  flex: 1;
  position: relative;
  background: linear-gradient(#15160f, #292922);
  border: 2px solid #0a0a0a;
  border-radius: 4px;
  display: flex;
  flex-direction: column;
  justify-content: space-between;
}
.screen b {
  color: #fff;
  font-size: 46px;
  line-height: 46px;
  text-align: right;
  padding-right: 11px;
}
.screen.range b {
  padding-right: 22px;
}
.screen p {
  display: flex;
  justify-content: space-between;
  padding: 0 3px 1px;
  font-size: 10px;
  line-height: 12px;
}
.target {
  position: absolute;
  left: 2px;
  top: 2px;
  width: 16px;
  height: 16px;
}
.status {
  height: 23px;
  border: 2px solid #17171a;
  border-radius: 6px;
  background: #36393d;
  display: flex;
  align-items: center;
  padding: 0 3px;
  gap: 4px;
  font-size: 8px;
}
.status output {
  width: 26px;
  height: 16px;
  border-radius: 3px;
  background: #26282b;
  text-align: center;
  line-height: 16px;
  font-size: 11px;
}
.status .u { color: #4a8fd0; }
.status .o { color: #d02a2a; }
.status button {
  width: 14px;
  height: 14px;
  background: #595b5f;
}
.status .lit {
  background: #b5b5b5;
  color: #222;
  margin-left: 9px;
}
.status .ft {
  width: 34px;
  line-height: 8px;
}
.status .go {
  width: 22px;
  background: #3dbd2b;
  color: #083a05;
}
.status .clock {
  width: 62px;
  color: #e8e8c8;
  background: #111;
}
.status .reset {
  width: 26px;
  border: 1px solid #888;
  border-radius: 2px;
}
.level {
  height: 37px;
  border: 2px solid #17171a;
  border-radius: 6px;
  background: #2a2b2e;
  display: flex;
  gap: 3px;
  padding: 2px;
}
.level output {
  width: 33px;
  border-radius: 4px;
  background: #141414;
  color: #ddd;
  font-size: 11px;
  line-height: 29px;
  text-align: center;
}
.gauge {
  flex: 1;
  background: #1c1c1d;
  border-radius: 4px;
  padding: 1px 3px;
}
.gauge p {
  display: flex;
  justify-content: space-between;
  font-weight: 700;
  line-height: 13px;
}
.scale {
  height: 13px;
  position: relative;
  display: flex;
  font-size: 8px;
  line-height: 13px;
  font-weight: 700;
}
.scale i {
  font-style: normal;
  color: #10283c;
  flex: 1 1 0;
  min-width: 0;
}
.scale .k { color: #222; }
.scale .g { color: #888; }
.scale.mom {
  background: linear-gradient(90deg, #3a87c4 48%, #fff 48%, #fff 71%, #242424 71%);
}
.scale.tp {
  background: linear-gradient(90deg, #98b92e 72%, #242424 72%);
}
.scale.tp i { color: #1f2a08; }
.scale.tp .g { color: #999; }
.scale svg {
  position: absolute;
  left: 66%;
  top: 0;
  width: 8px;
  height: 13px;
}
.scale.tp svg {
  left: 93%;
}

.multi {
  right: 2px;
  bottom: 0;
  width: 512px;
  height: 365px;
  background: #121a25;
  font-family: Lato, "Open Sans", sans-serif;
  color: #7e8fa5;
  font-size: 9px;
}
.tabs {
  display: flex;
  height: 25px;
  flex: none;
}
.tabs button {
  flex: 1;
  background: #3a4b66;
  color: #a3afc0;
  font-size: 14px;
}
.tabs .active {
  background: #1d2a3b;
  color: #a8e6b0;
}
.display {
  width: 100%;
  height: 223px;
  display: block;
}
.controls {
  flex: 1;
  display: flex;
  background: linear-gradient(#263754, #1d2a41);
  padding: 11px 18px 0 21px;
}
.controls button {
  width: 40px;
  height: 14px;
  background: #2b3b56;
  color: #8e9db2;
  white-space: nowrap;
}
.controls .on {
  background: #12222e;
  color: #b4f0b4;
}
.det {
  width: 160px;
  display: flex;
  flex-direction: column;
  align-items: center;
}
.det > span {
  line-height: 10px;
}
.det .sw {
  display: flex;
  margin: 1px 0 10px;
}
.det .sw button {
  border-left: 1px solid #223049;
  font-size: 8px;
}
.opt {
  display: flex;
  flex-direction: column;
  align-items: center;
}
.opt label {
  line-height: 10px;
}
.opt .second {
  margin-top: 13px;
}
.opt button {
  margin-top: 2px;
}
.opt button + button {
  margin-top: 7px;
}
.mini {
  display: flex;
  align-items: center;
  gap: 3px;
  font-size: 10px;
  color: #a8dcae;
  height: 14px;
}
.mini .ic {
  width: 5px;
  height: 8px;
}
.n2 select { width: 13px; }
.n5 select { width: 32px; }
.n7 select { width: 43px; }
.n8 select { width: 54px; }
.w-bands { width: 130px; }
.w-peak { width: 44px; margin-right: 23px; }
.w-level { flex: 1; border-left: 1px solid #2c3d5a; margin-bottom: 8px; }
.w-peak2 { width: 44px; }
```

FILE: app.js
```js
// timeline regions, x positions in ruler units
const starts = [230,324,379,440,503,585,643,694,765,841,922,987,1070,1159,1239,1309,1376,1434,1502,1574,1608,1700,1763,1817];
const ends   = [324,379,440,503,585,643,694,765,841,922,987,1039,1159,1239,1309,1376,1434,1502,1574,1608,1700,1763,1817,1888];
const LEFT = 221, RIGHT = 1917, GUTTER = 1897;

// loudness envelopes of every song
const env = [
  [9,3,8,9,10,11,12,12,12,3,7,9,11,9], [8,9,9,8,8,9], [10,11,11,12,12,12], [8,8,8,10,7,9,9], [16,15,16,16,16,15,15], [7,7,7,7],
  [3,6,8,8,9,9,9,9,2], [6,5,8,9,5,9,9,12,9,11,11,8], [9,9,9,9,8], [5,9,12,12,13,12,12,12], [10,11,12,11,12,13,13,2], [7,7,7],
  [9,10,9,9,8,8,7,7,6,6], [5,8,10,10,11,10,10,11,10,1], [2,8,9,3,5,9,8,9,9,9], [9,10,11,11,11,12,12,1], [7,7,7,7], [4,6,8,12,8,9,8,11,8,12],
  [6,7,8,7,9,7,8,10,9,9], [6,9,8,9], [11,12,10,7,6,7,6,8,6,7,10], [16,16,17,16,15,18,15,15], [7,8,8,8], [10,10,11,11,11,10]
];
const names = {9:'Tone Band', 10:'B', 12:'Terry Callier', 13:'Terry Calli', 17:'Carmen', 18:'Carmen J', 19:'C', 20:'Carmen Jone'};
const faded = {2:'Mik - A', 3:'Don - T', 7:'ABBA - C', 8:'Tim Blun', 22:'Home'};
const names3 = {9:'Tone Band - C', 10:'B', 12:'Terry Callier - D', 13:'Terry Callier -', 17:'Carmen Jo', 18:'Carmen Jon', 19:'Car', 20:'Carmen Jones -'};
const dots = {
  1: [0,7,9,10,12,13,14,17,18,19,20,21],
  2: [0,1,2,3,9,10,12,13,14,17,18,19,20,21],
  3: []
};

let seed = 7;
function rnd() {
  seed = (seed * 16807) % 2147483647;
  return seed / 2147483647;
}

function amp(list, t, lane) {
  const p = t * (list.length - 1);
  const i = Math.min(Math.floor(p), list.length - 2);
  const a = list[i] + (list[i + 1] - list[i]) * (p - i);
  if (lane === 1) return a;
  if (lane === 2) return a < 8 ? 7.5 - (8 - a) * 0.5 : 3.5 + a * 0.5;
  return a < 8 ? 17 - (8 - a) * 0.9 : 7 + a * 1.25;
}

function wave(list, w, lane, color) {
  let d = '';
  const spread = lane === 2 ? 0.28 : lane === 1 ? 0.42 : 0.3;
  const jitter = () => {
    const r = rnd();
    return 1 - spread / 2 + spread * r * r * r + spread / 4;
  };
  for (const c of [53, 123]) {
    let top = '', bottom = '';
    for (let x = 0; x < w - 2; x++) {
      const a = amp(list, x / w, lane);
      top += `L${x} ${(c - a * jitter()).toFixed(1)}h1`;
      bottom = `L${x + 1} ${(c + a * jitter()).toFixed(1)}h-1` + bottom;
    }
    d += 'M' + top.slice(1) + bottom + 'z';
  }
  return `<svg viewBox="0 0 ${w - 2} 158" preserveAspectRatio="none"><path d="${d}" fill="${color}"/></svg>`;
}

function lane(id, n, count) {
  let html = '', at = LEFT;
  for (let i = 0; i < count; i++) {
    const w = ends[i] - starts[i];
    if (starts[i] > at) html += `<div style="flex-grow:${starts[i] - at}"></div>`;
    const hot = n === 1 && i === 23;
    const color = hot ? '#fff0ae' : n === 3 ? '#f0ffb6' : '#adadad';
    const label = n === 3 ? names3[i] : names[i];
    let cls = 'region' + (hot ? ' hot' : '') + (label ? '' : ' plain');
    let text = label ? `<span>${label}</span>` : '';
    if (n === 1 && faded[i]) text = `<span class="faded">${faded[i]}</span>`;
    html += `<div class="${cls}" style="flex-grow:${w}">${wave(env[i], w, n, color)}${dots[n].includes(i) ? '<i></i>' : ''}${text}</div>`;
    at = ends[i];
  }
  html += `<div style="flex-grow:${GUTTER - at}"></div><div class="beyond" style="flex-grow:${RIGHT - GUTTER}"></div>`;
  document.getElementById(id).innerHTML = html;
}
lane('lane1', 1, 24);
lane('lane2', 2, 24);
lane('lane3', 3, 23);
lane('lane4', 4, 0);

// ruler
const labels = ['1','1:05','1:10','1:15','1:20','1:25','1:30','1:35','1:40','1:45','1:50','1:55','2','2:05','2:10','2:15','2:20'];
let times = '<span style="flex-grow:9;padding:0"></span>';
labels.forEach((t, i) => {
  times += `<span style="flex-grow:${i === 0 ? 93 : 93.3};padding-left:${i === 0 ? 3 : 4}px">${t}</span>`;
});
times += '<span class="loop" style="flex-grow:73">2:25</span><span style="flex-grow:29;padding:0"></span>';
document.getElementById('times').innerHTML = times;
let ticks = '';
for (let i = 1; i <= 89; i++) {
  const x = (8.5 + i * 18.65).toFixed(1);
  ticks += i % 5 === 0 ? `<path d="M${x} 3V38" stroke="#7d7d7d"/>` : `<path d="M${x} 34V38" stroke="#6a6a6a"/>`;
}
ticks += '<path d="M8.500 2V38" stroke="#888" stroke-dasharray="1 2"/><path d="M1676.500 0V38" stroke="#161616"/><path d="M1684 5v11l-6-5.500z" fill="#777"/><path d="M1 4v12l6-6z" fill="#606060"/>';
document.getElementById('ticks').innerHTML = ticks;

// channel strips
const strips = [
  {name:'Audio 2', input:'Input', fx:[], out:'32 SUM', pk:'-8,9', lv:[57,57], hold:[48,50], ri:1, tag:'2', color:'gold', sel:1},
  {name:'Audio 1', input:'In 1-2', white:1, fx:['RX 6 De...','*LoAir (s)','*SonEQ'], out:'32 SUM', ri:1, tag:'1', color:'rust'},
  {name:'Audio 3', input:'Input', fx:['X-Noise (s','TDR Slic...'], out:'32 SUM', ri:1, tag:'3', color:'lime'},
  {name:'Audio 4', input:'Input', fx:[], out:'32 SUM', ri:1, tag:'4', color:'rust'},
  {name:'Audio 5', input:'Input', fx:[], out:'32 SUM', ri:1, tag:'5', color:'green'},
  {name:'32 S...BUS', fx:['Stereo T...','DirMix'], out:'St Out', pk:'-8,9', lv:[57,57], hold:[48,50], tag:'32 S...BUS', color:'olive'},
  {name:'Ster...tput', fx:['*Mastering','*MultiMtr','*WLM Me...'], pk:'-8,1', lv:[54,57], hold:[48,49], bnc:1, tag:'L Out 1', color:'purple'}
];
const meterMarks = [[0,19],[3,28],[6,37],[9,46],[12,55],[15,64],[18,72],[21,82],[24,91],[30,103],[35,113],[40,123],[45,133],[50,142],[60,152]];
const major = [19,37,53,70,88,99,112,122,132,141,152];

function faderTicks(x2, long, short) {
  let s = '';
  for (let y = 19; y < 150; y += y > 104 ? 3.5 : 5.6) s += `<path d="M${x2 - short} ${y.toFixed(1)}H${x2}" stroke="#8c8c8c" stroke-width=".7"/>`;
  major.forEach(y => { s += `<path d="M${x2 - long} ${y}H${x2}" stroke="${y === 53 ? '#fff' : '#a5a5a5'}"/>`; });
  return s;
}

function strip(s) {
  let scale = faderTicks(14, 10, 4) + '<rect x="16" y="17" width="2" height="136" fill="#303030"/>';
  meterMarks.forEach(([t, y]) => {
    scale += `<text x="40" y="${y + 3}" text-anchor="end" font-size="8" fill="#a6a6a6">${t}</text>`;
  });
  scale += '<path d="M43.500 18V152" stroke="#999" stroke-width="3" stroke-dasharray="1 2"/><rect x="46" y="16" width="12" height="139" fill="#363636"/>';
  if (s.lv) {
    s.lv.forEach((y, i) => {
      scale += `<rect x="${47 + i * 5}" y="${y}" width="4" height="${154 - y}" fill="#6cc667"/><rect x="${47 + i * 5}" y="${s.hold[i]}" width="4" height="1" fill="#e0cc50"/>`;
    });
  }
  const rings = '<svg class="ic"><use href="#i-rings"/></svg>';
  const input = s.input
    ? `<button class="slot two${s.white ? '' : ' black'}"><svg class="ic" style="color:#e0e0e0"><use href="#i-rings"/></svg><span>${s.input}</span></button>`
    : `<button class="slot">${rings}</button>`;
  const fx = s.fx.map(f => `<button class="slot${f[0] === '*' ? ' on' : ''}">${f.replace('*', '')}</button>`).join('');
  return `<div class="strip${s.sel ? ' selected' : ''}">
    <span class="cname">${s.name}</span>
    <button class="slot black">Setting</button>
    ${input}
    <div class="fx">${fx}</div>
    ${s.out ? `<button class="slot">${s.out}</button>` : '<span></span>'}
    <button class="slot read">Read</button>
    <svg width="36" height="36" viewBox="0 0 36 36"><path d="M8 32A16.500 16.500 0 1 1 28 32" fill="none" stroke="#343434" stroke-width="3"/><circle cx="18" cy="19" r="14" fill="#8b8b8b"/><path d="M18 6v5" stroke="#111" stroke-width="1.500"/></svg>
    <div class="dbs"><output>0,0</output><output class="pk">${s.pk || ''}</output></div>
    <div class="fader"><svg viewBox="0 0 66 158">${scale}</svg><input type="range" value="80" aria-label="${s.name} volume"></div>
    ${s.ri ? `<div class="pair ri"><button class="${s.sel ? 'rec' : ''}">R</button><button>I</button></div>` : s.bnc ? '<div class="pair ri"><button>Bnc</button></div>' : '<span></span>'}
    <div class="pair"><button>M</button><button>S</button></div>
    <div class="tag ${s.color}">${s.tag}</div>
  </div>`;
}
document.getElementById('strips').innerHTML = strips.map(strip).join('');

const legendMarks = ['6','3','0','3','6','10','15','20','30','40','∞'];
let legend = faderTicks(71, 11, 4);
major.forEach((y, i) => {
  legend += `<text x="57" y="${y + 3}" text-anchor="end" font-size="8" fill="#a6a6a6">${legendMarks[i]}</text>`;
});
const legendSvg = document.getElementById('legendScale');
legendSvg.innerHTML = legend;
legendSvg.setAttribute('width', 72);

// auto EQ graph
let eq = '';
[303,367,412,447,475,500,521,538,554,661,725,770,805,833,858,878,896,913,1021,1084,1130,1165,1192,1215,1237,1255,1272,1380].forEach(x => {
  eq += `<path d="M${x} 330V1100" stroke="#101e29" stroke-width="3"/>`;
});
const dotsY = [1021,1017,1013,1010,1014,1020,1011,992,981,973,963,959,961,959,953,953,963,961,961,962,938,966,975,981,981,954,965,973,960,989,969,958,968,953,983,1012,962,982,1016,952,956,958,982,949,959,945,985,955,972,934,958,973,974,982,1000,988,988,983,997,1000,1008,1000,1000,999,1013,1013,1017,1012,1021,1020,1033,1027,1029,1042,1054,1047,1064,1072,1073,1082];
eq += '<defs><linearGradient id="fade" x1="0" y1="900" x2="0" y2="1190" gradientUnits="userSpaceOnUse"><stop offset="0" stop-color="#4d5c66"/><stop offset="1" stop-color="#08121b"/></linearGradient></defs>';
dotsY.forEach((y, i) => {
  const x = Math.round(304 + i * 13.42);
  eq += `<rect x="${x - 1}" y="${y + 12}" width="3" height="${1180 - y}" fill="url(#fade)"/><circle cx="${x}" cy="${y}" r="2.500" fill="#9aa5ab"/>`;
});
eq += '<path d="M303 745H1380" stroke="#3d83a8" stroke-width="3" stroke-dasharray="5 4"/>';
eq += '<circle cx="554" cy="745" r="16" fill="#24465c"/><circle cx="916" cy="745" r="16" fill="#24465c"/>';
[[303,'20'],[445,'50'],[554,'100'],[725,'300'],[858,'700'],[1019,'2k'],[1160,'5k'],[1270,'10k']].forEach(([x, t]) => {
  eq += `<text x="${x}" y="793" text-anchor="middle" fill="#6a747c">${t}</text>`;
});
[[380,'12'],[563,'6'],[745,'0'],[929,'-6'],[1112,'-12']].forEach(([y, t]) => {
  eq += `<text x="1432" y="${y + 9}" text-anchor="end" fill="#525c64">${t}</text>`;
});
const curve = 'M303 744H368C385 744 385 665 425 664C465 664 475 740 500 770C520 792 535 795 548 780C560 765 565 725 590 725C605 729 612 725 622 738C630 750 632 797 642 797C655 795 657 752 672 760C688 760 690 724 705 724C725 726 730 803 743 803C755 803 756 772 765 776C775 782 776 803 783 803C795 797 798 795 803 793C815 785 815 760 826 760C838 772 838 780 848 781C853 768 860 764 868 768C882 780 884 792 894 793C915 797 925 805 948 806C970 797 985 797 1000 796C1025 792 1035 795 1060 806C1085 798 1120 804 1140 802C1170 802 1190 780 1203 765C1215 735 1225 720 1240 714C1260 708 1275 707 1300 710C1330 706 1350 702 1378 700';
eq += `<path d="${curve}V745H303z" fill="#7a2c8a" opacity=".16"/><path d="${curve}" fill="none" stroke="#c562cc" stroke-width="4"/>`;
eq += '<circle cx="1235" cy="713" r="30" fill="#1c4c80" opacity=".6"/><circle cx="1235" cy="713" r="21" fill="#4795e6"/>';
document.getElementById('eq').innerHTML = eq;

// dynamics and correlation meters
function txt(x, y, t, fill, anchor) {
  return `<text x="${x}" y="${y}" fill="${fill}" text-anchor="${anchor || 'start'}">${t}</text>`;
}
function line(x, y, w, fill, h) {
  return `<rect x="${x}" y="${y}" width="${w}" height="${h || 2}" fill="${fill}"/>`;
}
const dim = '#68737c', off = '#3d4952', hi = '#a8b2ba', back = '#10212e', green = '#4bad4b';
let dyn = txt(21, 15, 'True Peak', dim);
dyn += line(21, 24, 139, back) + line(21, 30, 139, back) + line(21, 24, 78, green, 3) + line(21, 30, 74, green, 3);
dyn += line(126, 24, 1, '#d8c94a') + line(123, 30, 1, '#b08a30') + line(132, 36, 1, '#fff', 3);
dyn += txt(20, 52, '-60', off, 'middle') + txt(132, 52, '0', '#fff', 'middle') + txt(160, 52, '6', off, 'middle');
dyn += '<rect x="170" y="17" width="33" height="21" rx="3" fill="#11222e"/>' + txt(187, 31, '-1.3', '#d8c95a', 'middle');
dyn += txt(21, 80, 'LUFS', dim);
[['M',72,'-13.7'],['S',74,'-13.3'],['I',69,'-14.0']].forEach(([n, w, v], i) => {
  const y = 89 + i * 12;
  dyn += txt(8, y + 4, n, dim, 'middle') + line(21, y, 139, back) + line(21, y, w, green, 3) + txt(194, y + 4, v, hi, 'end');
});
dyn += line(160, 119, 1, '#fff', 3) + txt(20, 135, '-60', off, 'middle') + txt(160, 135, '0', '#fff', 'middle');
document.getElementById('dynMeters').innerHTML = dyn;

let corr = '<defs><linearGradient id="cg"><stop offset="0" stop-color="#c4403a"/><stop offset=".5" stop-color="#d9a441"/><stop offset="1" stop-color="#4fae46"/></linearGradient></defs>';
corr += txt(21, 9, 'Correlation', dim) + line(21, 29, 139, 'url(#cg)', 3) + line(90, 15, 1, '#98a03a', 10) + line(131, 20, 11, '#a3d04a', 6) + line(132, 15, 1, '#fff', 11);
corr += line(90, 36, 1, '#ccc', 3) + txt(20, 51, '-1', off, 'middle') + txt(90, 51, '0', '#fff', 'middle') + txt(160, 51, '+1', off, 'middle') + txt(194, 31, '0.6', hi, 'end');
document.getElementById('corr').innerHTML = corr;

// analyzer
const tops = [763,711,687,678,645,651,645,648,626,636,663,655,600,630,660,665,671,669,657,738,663,683,677,670,655,702,637,618,615,636,570,642,640,646,633,648,612,663,645,624,624,642,655,666,709,745,763,757,775];
const holds = [766,706,655,616,571,568,556,514,532,541,532,568,571,511,532,574,559,568,535,550,514,529,550,577,583,547,535,505,529,505,526,520,505,505,517,529,523,502,532,544,532,529,532,550,610,625,628,655,670,652,688,688,715,751];
let an = '';
function t(x, y, s, fill, size, anchor) {
  an += `<text x="${x}" y="${y}" fill="${fill}" font-size="${size}" text-anchor="${anchor || 'start'}">${s}</text>`;
}
['0','-5','-10','-15','-20','-25','-30','-35','-40','-45'].forEach((s, i) => {
  const y = 265 + i * 58.3;
  an += `<path d="M97 ${y}H1172" stroke="${i ? '#1e2835' : '#34404e'}" stroke-width="3"/>`;
  t(82, y + 6, s, i ? '#3b4654' : '#8a96a4', 21, 'end');
});
t(82, 230, 'dB', '#2f3946', 21, 'end');
t(124, 230, 'Top:', '#4f6172', 24); t(173, 230, '0 dB', '#a8e6b0', 24);
t(271, 230, 'Range:', '#4f6172', 24); t(350, 230, '45 dB', '#a8e6b0', 24);
[[118,'16'],[218,'31'],[318,'62'],[415,'125'],[514,'250'],[613,'500'],[711,'1 k'],[811,'2 k'],[909,'4 k'],[1010,'8 k'],[1110,'16 k'],[1173,'Hz']].forEach(([x, s]) => t(x, 818, s, '#3b4654', 18, 'middle'));
tops.forEach((y, i) => { an += `<rect x="${(261 + i * 16.45).toFixed(0)}" y="${y}" width="14" height="${789 - y}" fill="#4f7d9f"/>`; });
holds.forEach((y, i) => { an += `<rect x="${(244 + i * 16.5).toFixed(0)}" y="${y - 1}" width="15" height="3" fill="#e9dc62"/>`; });
an += '<path d="M1227 215V830" stroke="#1b2532" stroke-width="3"/>';
t(1298, 230, 'LUFS', '#7e8fa5', 24, 'middle'); t(1425, 230, 'L', '#7e8fa5', 24, 'middle'); t(1501, 230, 'R', '#7e8fa5', 24, 'middle');
t(1262, 257, 'LU-I', '#3b4654', 18); t(1306, 257, '-20.7', '#e0cf58', 18);
t(1262, 281, 'LU-S', '#3b4654', 18); t(1306, 281, '-20.1', '#e0cf58', 18);
t(1404, 257, '-8.1', '#e0cf58', 18); t(1442, 257, 'Peak', '#3b4654', 17); t(1492, 257, '-8.6', '#e0cf58', 18);
t(1396, 281, '-22.3', '#7fa6dd', 18); t(1443, 281, 'RMS', '#3b4654', 17); t(1486, 281, '-22.7', '#7fa6dd', 18);
[[296,'6'],[325,'3'],[358,'0'],[390,'-3'],[422,'-6'],[451,'-9'],[484,'-12'],[515,'-16'],[546,'-20'],[577,'-24'],[608,'-30'],[640,'-40'],[671,'-50'],[701,'-60']].forEach(([y, s]) => {
  an += `<path d="M1263 ${y}H1350M1384 ${y}H1518" stroke="${s === '0' ? '#34404e' : '#1e2835'}" stroke-width="3"/>`;
  t(1376, y + 6, s, s === '0' ? '#9aa5b2' : '#3b4654', 17, 'end');
});
an += '<path d="M1263 570H1336M1395 482H1520" stroke="#7a6a35" stroke-width="3"/><rect x="1290" y="548" width="24" height="22" fill="#f2c43c"/><rect x="1290" y="570" width="24" height="132" fill="#4f7d9f"/>';
an += '<path d="M1415 501h11V702h-11zM1428 578h15V702h-15zM1476 578h15V702h-15zM1493 504h10V702h-10z" fill="#4f7d9f"/><path d="M1416 443h10M1493 449h10" stroke="#e9dc62" stroke-width="3"/>';
t(1390, 775, 'CORRELATION', '#48576a', 18, 'middle');
an += '<defs><linearGradient id="ag"><stop offset="0" stop-color="#d89c30"/><stop offset="1" stop-color="#5a8f3a"/></linearGradient></defs><rect x="1391" y="801" width="109" height="15" fill="url(#ag)"/><path d="M1266 820H1391" stroke="#7a2a24" stroke-width="3"/><path d="M1391 820H1518" stroke="#8a8a3c" stroke-width="3"/><path d="M1391 792V820" stroke="#d04a2c" stroke-width="3"/><path d="M1466 792V816" stroke="#fff" stroke-width="4"/>';
document.getElementById('analyzer').innerHTML = an;
```
